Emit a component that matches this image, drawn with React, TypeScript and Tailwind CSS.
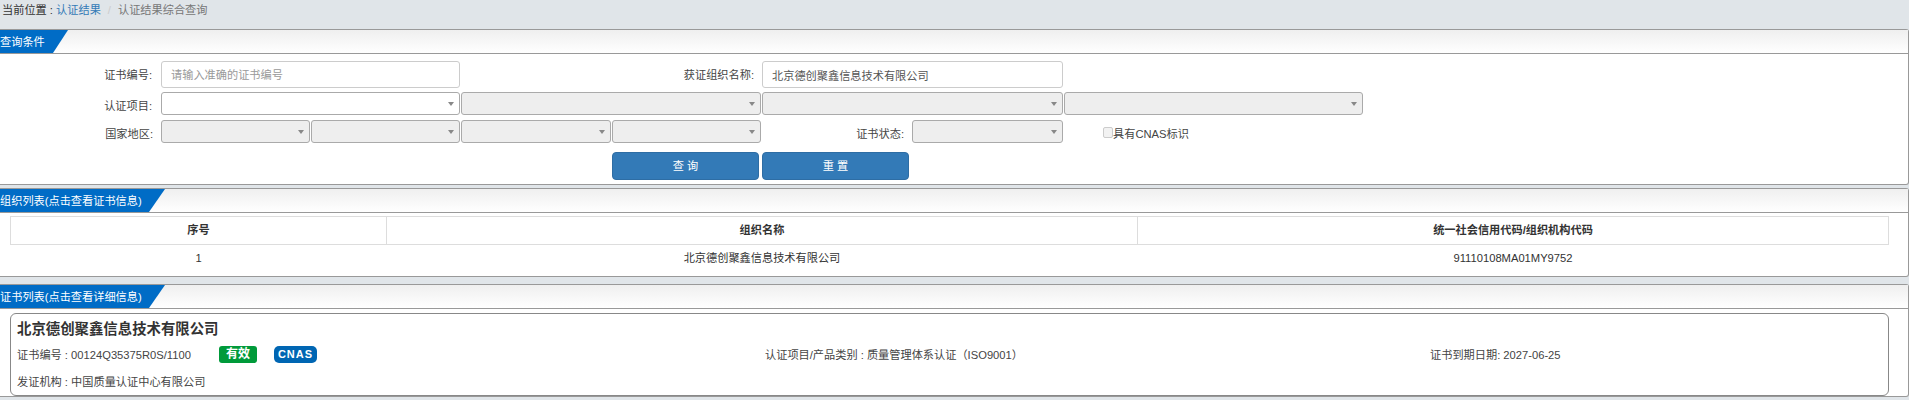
import React from "react";

const Panel = ({ title, tabClass, className, children }: { title: string; tabClass: string; className: string; children: React.ReactNode }) => (
  <section className={`border border-l-0 border-[#999] rounded-tr-[3px] rounded-br-[3px] bg-white ${className}`}>
    <div className="h-[24px] border-b border-[#999] bg-gradient-to-b from-[#efefef] to-white">
      <div className={`h-[23px] bg-[#006cc6] text-white leading-[25px] whitespace-nowrap ${tabClass}`}>{title}</div>
    </div>
    {children}
  </section>
);

const Select = ({ w, on }: { w: string; on?: boolean }) => (
  <div className={`h-[23px] ${w} shrink-0 rounded-[3px] border border-[#aaa] flex items-center justify-end pr-[5px] ${on ? "bg-white" : "bg-[#eeeeee]"}`}>
    <svg width="6" height="4" viewBox="0 0 6 4"><path d="M0 0H6L3 4Z" fill="#888" /></svg>
  </div>
);

const Label = ({ w, pt, children }: { w: string; pt: string; children: React.ReactNode }) => (
  <div className={`${w} ${pt} shrink-0 text-right text-[#444]`}>{children}</div>
);

export default function App() {
  return (
    <div className="min-h-[400px] bg-[#e0e5e9] text-[11.2px] text-[#333] font-['Liberation_Sans','Noto_Sans_CJK_SC',sans-serif]">
      <div className="h-[29px] pt-[3px] pl-[2px] leading-[14px] whitespace-nowrap">
        当前位置 : <span className="text-[#337ab7]">认证结果</span>
        <span className="text-[#ccc] px-[7px]">/</span>
        <span className="text-[#777]">认证结果综合查询</span>
      </div>

      <Panel title="查询条件" tabClass="w-[68px] [clip-path:polygon(0_0,68px_0,53px_100%,0_100%)]" className="h-[156px]">
        <div className="pt-[7px]">
          <div className="flex items-center h-[27px]">
            <Label w="w-[161px] pr-[9px]" pt="pt-[2px]">证书编号:</Label>
            <input readOnly placeholder="请输入准确的证书编号" className="w-[299px] h-[27px] rounded-[3px] border border-[#ccc] px-[9px] outline-none placeholder:text-[#999]" />
            <Label w="w-[302px] pr-[8px]" pt="pt-[2px]">获证组织名称:</Label>
            <input readOnly value="北京德创聚鑫信息技术有限公司" className="w-[301px] h-[27px] rounded-[3px] border border-[#ccc] px-[9px] text-[#555] outline-none" />
          </div>
          <div className="flex items-center h-[23px] mt-[4px]">
            <Label w="w-[161px] pr-[9px]" pt="pt-[6px]">认证项目:</Label>
            <div className="flex gap-[1px]">
              <Select w="w-[299px]" on />
              <Select w="w-[300px]" />
              <Select w="w-[301px]" />
              <Select w="w-[299px]" />
            </div>
          </div>
          <div className="flex items-center h-[23px] mt-[5px]">
            <Label w="w-[161px] pr-[8px]" pt="pt-[6px]">国家地区:</Label>
            <div className="flex gap-[1px]">
              <Select w="w-[149px]" />
              <Select w="w-[149px]" />
              <Select w="w-[150px]" />
              <Select w="w-[149px]" />
            </div>
            <Label w="w-[151px] pr-[8px]" pt="pt-[6px]">证书状态:</Label>
            <Select w="w-[151px]" />
            <label className="ml-[40px] pt-[5px] flex items-center text-[#444]">
              <span className="w-[10px] h-[11px] mb-[2px] border border-[#ccc] bg-[#f2f2f2] rounded-[2px]" />
              具有CNAS标识
            </label>
          </div>
          <div className="flex justify-start gap-[3px] mt-[9px] pl-[612px]">
            <button className="w-[147px] h-[28px] rounded-[4px] border border-[#2e6da4] bg-[#337ab7] text-white">查 询</button>
            <button className="w-[147px] h-[28px] rounded-[4px] border border-[#2e6da4] bg-[#337ab7] text-white">重 置</button>
          </div>
        </div>
      </Panel>

      <Panel title="组织列表(点击查看证书信息)" tabClass="w-[165px] [clip-path:polygon(0_0,165px_0,149px_100%,0_100%)]" className="mt-[3px] h-[89px]">
        <div className="pt-[3px] pl-[10px] pr-[19px]">
          <table className="w-full table-fixed border-collapse text-center">
            <thead>
              <tr className="h-[28px] font-bold text-[#333]">
                <th className="w-[376px] border border-[#ddd]">序号</th>
                <th className="w-[751px] border border-[#ddd]">组织名称</th>
                <th className="border border-[#ddd]">统一社会信用代码/组织机构代码</th>
              </tr>
            </thead>
            <tbody>
              <tr className="h-[28px]">
                <td>1</td>
                <td>北京德创聚鑫信息技术有限公司</td>
                <td>91110108MA01MY9752</td>
              </tr>
            </tbody>
          </table>
        </div>
      </Panel>

      <Panel title="证书列表(点击查看详细信息)" tabClass="w-[165px] [clip-path:polygon(0_0,165px_0,149px_100%,0_100%)]" className="mt-[7px] h-[113px]">
        <div className="pt-[4px] pl-[10px] pr-[19px]">
          <div className="h-[83px] rounded-[6px] border border-[#888] px-[6px] text-[#444]">
            <div className="h-[27px] pt-[5px] text-[14.4px] leading-[20px] font-bold text-[#333]">北京德创聚鑫信息技术有限公司</div>
            <div className="flex items-center h-[27px] whitespace-nowrap">
              <div className="w-[748px] shrink-0 flex items-center">
                <span className="w-[202px] shrink-0 pt-[2px]">证书编号 : 00124Q35375R0S/1100</span>
                <span className="w-[38px] h-[17px] rounded-[3px] bg-[#009a3a] text-white font-bold text-[12px] leading-[17px] text-center">有效</span>
                <span className="ml-[17px] w-[43px] h-[17px] rounded-[5px] bg-[#0066b3] text-white font-bold text-[11px] tracking-[1px] leading-[16px] text-center">CNAS</span>
              </div>
              <span className="w-[665px] shrink-0 pt-[2px]">认证项目/产品类别 : 质量管理体系认证（ISO9001）</span>
              <span className="pt-[2px]">证书到期日期: 2027-06-25</span>
            </div>
            <div className="h-[27px] leading-[28px]">发证机构 : 中国质量认证中心有限公司</div>
          </div>
        </div>
      </Panel>
    </div>
  );
}
